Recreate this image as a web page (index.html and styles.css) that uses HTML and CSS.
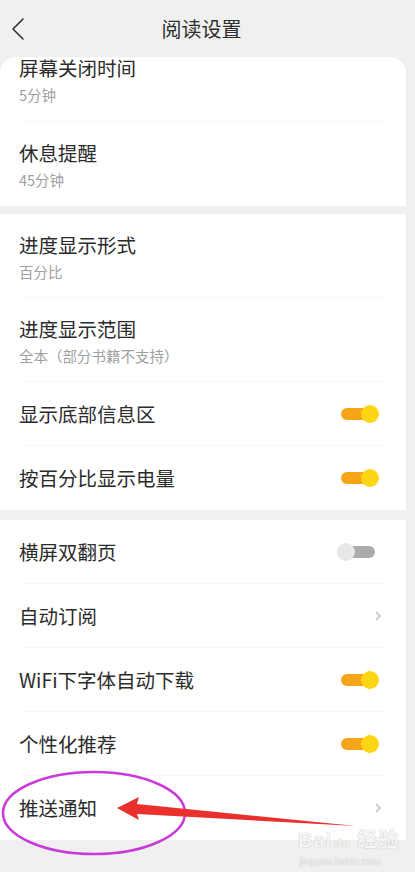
FILE: index.html
```html
<!DOCTYPE html>
<html lang="zh-CN">
<head>
  <meta charset="UTF-8">
  <title>阅读设置</title>
  <link rel="stylesheet" href="styles.css">
</head>
<body>
  <div class="screen">
    <div class="topbar">
      <svg class="back" width="14" height="24" viewBox="0 0 14 24">
        <polyline points="12,2 2,12 12,22" fill="none" stroke="#333" stroke-width="1.6" stroke-linecap="round" stroke-linejoin="round"/>
      </svg>
      <h1>阅读设置</h1>
    </div>

    <div class="content">
      <div class="card first">
        <div class="row two cut">
          <div class="label">
            <div class="title">屏幕关闭时间</div>
            <div class="sub">5分钟</div>
          </div>
        </div>
        <div class="row two">
          <div class="label">
            <div class="title">休息提醒</div>
            <div class="sub">45分钟</div>
          </div>
        </div>
      </div>

      <div class="card">
        <div class="row two">
          <div class="label">
            <div class="title">进度显示形式</div>
            <div class="sub">百分比</div>
          </div>
        </div>
        <div class="row two">
          <div class="label">
            <div class="title">进度显示范围</div>
            <div class="sub">全本（部分书籍不支持）</div>
          </div>
        </div>
        <div class="row">
          <div class="title">显示底部信息区</div>
          <span class="switch on"></span>
        </div>
        <div class="row">
          <div class="title">按百分比显示电量</div>
          <span class="switch on"></span>
        </div>
      </div>

      <div class="card">
        <div class="row">
          <div class="title">横屏双翻页</div>
          <span class="switch"></span>
        </div>
        <div class="row">
          <div class="title">自动订阅</div>
          <svg class="more" width="6" height="10" viewBox="0 0 6 10">
            <polyline points="1,1 5,5 1,9" fill="none" stroke="#b5b5b5" stroke-width="1.3"/>
          </svg>
        </div>
        <div class="row">
          <div class="title">WiFi下字体自动下载</div>
          <span class="switch on"></span>
        </div>
        <div class="row">
          <div class="title">个性化推荐</div>
          <span class="switch on"></span>
        </div>
        <div class="row">
          <div class="title">推送通知</div>
          <svg class="more" width="6" height="10" viewBox="0 0 6 10">
            <polyline points="1,1 5,5 1,9" fill="none" stroke="#b5b5b5" stroke-width="1.3"/>
          </svg>
        </div>
      </div>
    </div>

    <!-- annotation drawn over the screenshot -->
    <svg class="marks" width="415" height="872" viewBox="0 0 415 872">
      <ellipse cx="94" cy="813" rx="91" ry="41" fill="none" stroke="#c93bd8" stroke-width="2.5"/>
      <polygon points="117,808 139,797 137,804 356,826 137,814 139,820" fill="#e9302d"/>
    </svg>
    <div class="watermark">
      <div class="wm-logo">Bai<span class="paw">du</span> 经验</div>
      <div class="wm-url">jingyan.baidu.com</div>
    </div>
  </div>
</body>
</html>
```

FILE: styles.css
```css
* {
  box-sizing: border-box;
  margin: 0;
  padding: 0;
}

body {
  font-family: "Noto Sans CJK SC", "Noto Sans", sans-serif;
  background: #f0f0f0;
  color: #333;
}

.screen {
  position: relative;
  width: 415px;
  height: 872px;
  overflow: hidden;
  background: #f0f0f0;
}

.topbar {
  height: 57px;
  display: flex;
  align-items: center;
  justify-content: center;
  position: relative;
}

.topbar h1 {
  font-size: 20px;
  font-weight: 400;
  color: #2e2e2e;
  line-height: 57px;
  margin-left: -12px;
}

.back {
  position: absolute;
  left: 11px;
  top: 17px;
}

.content {
  width: 406px;
}

.card {
  background: #fff;
  margin-bottom: 10px;
}

.card.first {
  border-radius: 16px 16px 0 0;
  margin-bottom: 8px;
}

.row {
  height: 64px;
  margin: 0 22px 0 20px;
  border-bottom: 1px solid #f7f7f7;
  display: flex;
  align-items: center;
  justify-content: space-between;
}

.row:last-child {
  border-bottom: none;
}

.row.two {
  height: 84px;
  align-items: flex-start;
  padding-top: 18px;
}

.row.cut {
  height: 65px;
  padding-top: 0;
}

.title {
  font-size: 19.5px;
  line-height: 26px;
  color: #2b2b2b;
  margin-left: -1px;
}

.row.cut .title {
  line-height: 22px;
}

.sub {
  font-size: 14.5px;
  line-height: 20px;
  color: #a0a0a0;
  margin-top: 4px;
  margin-left: -1px;
}

.row.cut .sub {
  margin-top: 6px;
}

.more {
  margin-right: 3px;
}

/* toggle switch */
.switch {
  position: relative;
  width: 42px;
  height: 18px;
  margin-right: 5px;
}

.switch::before {
  content: "";
  position: absolute;
  left: 4px;
  right: 4px;
  top: 3px;
  height: 12px;
  border-radius: 6px;
  background: #ababab;
}

.switch::after {
  content: "";
  position: absolute;
  left: 0;
  top: 0;
  width: 18px;
  height: 18px;
  border-radius: 50%;
  background: #e8e8e8;
}

.switch.on::before {
  background: #f6a519;
}

.switch.on::after {
  left: auto;
  right: 0;
  background: #fdd613;
}

.marks {
  position: absolute;
  left: 0;
  top: 0;
  pointer-events: none;
}

.watermark {
  position: absolute;
  left: 298px;
  top: 828px;
  color: #f6f6f6;
  text-shadow: 0 0 1px #a5a5a5;
  font-family: "Liberation Sans", "Noto Sans CJK SC", sans-serif;
}

.wm-logo {
  font-size: 20px;
  font-weight: 700;
  line-height: 24px;
  letter-spacing: 1px;
}

.paw {
  font-size: 12px;
  margin-left: 2px;
}

.wm-url {
  font-size: 10px;
  line-height: 14px;
  margin-left: 2px;
}
```
